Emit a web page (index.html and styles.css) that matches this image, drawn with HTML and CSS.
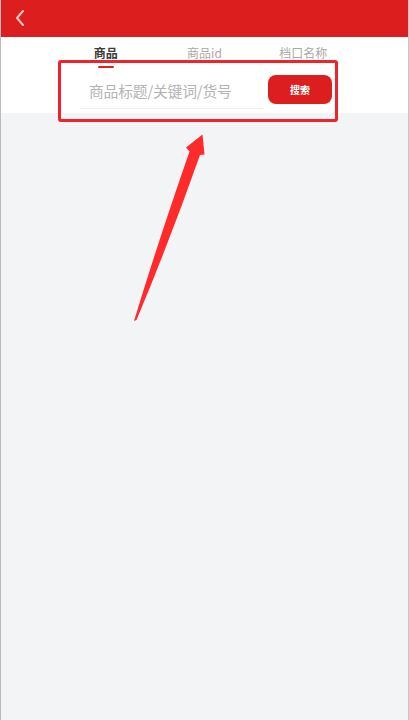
FILE: index.html
```html
<!DOCTYPE html>
<html lang="zh">
<head>
<meta charset="utf-8">
<title>搜索</title>
<link rel="stylesheet" href="styles.css">
</head>
<body>
<div class="screen">
  <header class="topbar">
    <svg class="back" width="12" height="18" viewBox="0 0 12 18">
      <path d="M9 2 L3 9 L9 16" fill="none" stroke="#f6c9c9" stroke-width="2" stroke-linecap="round" stroke-linejoin="round"/>
    </svg>
  </header>
  <section class="search-panel">
    <nav class="tabs">
      <div class="tab active">商品</div>
      <div class="tab">商品id</div>
      <div class="tab">档口名称</div>
    </nav>
    <div class="search-row">
      <div class="field">商品标题/关键词/货号</div>
      <button class="search-btn">搜索</button>
    </div>
  </section>
  <main class="content"></main>

  <div class="mark-box"></div>
  <svg class="mark-arrow" width="409" height="720" viewBox="0 0 409 720">
    <path d="M134 321 Q158 242 189.5 151.5 L186 147.5 L202.5 134.5 L204.5 154.5 L200 155 Q170 240 136.5 320 Z" fill="#ff2b2b"/>
  </svg>
</div>
</body>
</html>
```

FILE: styles.css
```css
* { box-sizing: border-box; margin: 0; padding: 0; }
html, body { width: 409px; height: 720px; overflow: hidden; }
body {
  font-family: "Noto Sans CJK SC", "Noto Sans", sans-serif;
  background: #f3f4f6;
}
.screen {
  position: relative;
  width: 409px;
  height: 720px;
  display: flex;
  flex-direction: column;
  border-left: 1px solid #b9bbbd;
  border-right: 1px solid #c4c6c8;
}
.topbar {
  height: 37px;
  background: #dc1e1e;
  display: flex;
  align-items: center;
  padding-left: 13px;
  flex-shrink: 0;
}
.back { display: block; margin-top: -2px; }
.search-panel {
  background: #fff;
  height: 76px;
  flex-shrink: 0;
}
.tabs {
  width: 296px;
  margin: 0 auto;
  display: grid;
  grid-template-columns: repeat(3, 1fr);
  padding-top: 7px;
}
.tab {
  text-align: center;
  font-size: 12px;
  line-height: 17px;
  color: #a9a9a9;
  position: relative;
  height: 24px;
}
.tab.active { color: #3a3a3a; font-weight: 600; }
.tab.active::after {
  content: "";
  position: absolute;
  left: 50%;
  bottom: 0;
  width: 16px;
  height: 2px;
  margin-left: -8px;
  background: #e02020;
  border-radius: 1px;
}
.search-row {
  display: flex;
  align-items: center;
  padding: 8px 0 0 79px;
}
.field {
  width: 183px;
  height: 33px;
  border-bottom: 1px solid #eeeeee;
  font-size: 14.8px;
  line-height: 30px;
  color: #b3b3b3;
  padding-left: 9px;
  letter-spacing: -0.2px;
}
.search-btn {
  margin-left: 5px;
  margin-top: -6px;
  width: 64px;
  height: 29px;
  border: none;
  border-radius: 8px;
  background: #dc1e1e;
  color: #fff;
  font-family: inherit;
  font-size: 10px;
  font-weight: 700;
}
.content { flex: 1; background: #f3f4f6; }

/* highlight frame and pointer drawn over the page */
.mark-box {
  position: absolute;
  left: 57px;
  top: 60px;
  width: 280px;
  height: 62px;
  border: 3px solid #f0222a;
  border-radius: 3px;
}
.mark-arrow {
  position: absolute;
  left: -1px;
  top: 0;
  pointer-events: none;
}
```
